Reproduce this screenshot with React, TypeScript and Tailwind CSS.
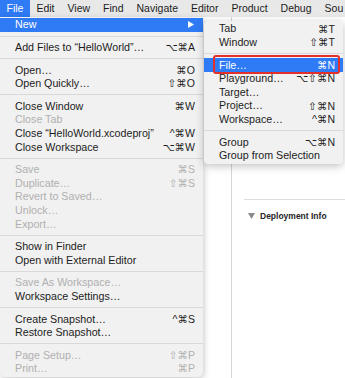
import React from "react";

type Item =
  | { sep: true }
  | { label: string; key?: string; disabled?: boolean; active?: boolean; arrow?: boolean; marked?: boolean };

const fileMenu: Item[] = [
  { label: "New", active: true, arrow: true },
  { sep: true },
  { label: "Add Files to \u201CHelloWorld\u201D\u2026", key: "\u2325\u2318A" },
  { sep: true },
  { label: "Open\u2026", key: "\u2318O" },
  { label: "Open Quickly\u2026", key: "\u21E7\u2318O" },
  { sep: true },
  { label: "Close Window", key: "\u2318W" },
  { label: "Close Tab", disabled: true },
  { label: "Close \u201CHelloWorld.xcodeproj\u201D", key: "^\u2318W" },
  { label: "Close Workspace", key: "\u2325\u2318W" },
  { sep: true },
  { label: "Save", key: "\u2318S", disabled: true },
  { label: "Duplicate\u2026", key: "\u21E7\u2318S", disabled: true },
  { label: "Revert to Saved\u2026", disabled: true },
  { label: "Unlock\u2026", disabled: true },
  { label: "Export\u2026", disabled: true },
  { sep: true },
  { label: "Show in Finder" },
  { label: "Open with External Editor" },
  { sep: true },
  { label: "Save As Workspace\u2026", disabled: true },
  { label: "Workspace Settings\u2026" },
  { sep: true },
  { label: "Create Snapshot\u2026", key: "^\u2318S" },
  { label: "Restore Snapshot\u2026" },
  { sep: true },
  { label: "Page Setup\u2026", key: "\u21E7\u2318P", disabled: true },
  { label: "Print\u2026", key: "\u2318P", disabled: true },
];

const newMenu: Item[] = [
  { label: "Tab", key: "\u2318T" },
  { label: "Window", key: "\u21E7\u2318T" },
  { sep: true },
  { label: "File\u2026", key: "\u2318N", active: true, marked: true },
  { label: "Playground\u2026", key: "\u2325\u21E7\u2318N" },
  { label: "Target\u2026" },
  { label: "Project\u2026", key: "\u21E7\u2318N" },
  { label: "Workspace\u2026", key: "^\u2318N" },
  { sep: true },
  { label: "Group", key: "\u2325\u2318N" },
  { label: "Group from Selection" },
];

const menuBar = ["File", "Edit", "View", "Find", "Navigate", "Editor", "Product", "Debug", "Sou"];

function MenuRows({ items }: { items: Item[] }) {
  return (
    <>
      {items.map((item, i) => {
        if ("sep" in item) {
          return (
            <div key={i} className="h-[9px] flex items-center">
              <div className="h-px w-full bg-[#d9d9d9]" />
            </div>
          );
        }
        const color = item.active ? "text-white" : item.disabled ? "text-[#b0b0b0]" : "text-[#1c1c1c]";
        return (
          <div
            key={i}
            className={`relative h-[13.6px] flex items-center justify-between pl-[15px] pr-[8px] ${
              item.active ? "bg-[#2f7af5]" : ""
            } ${color}`}
          >
            <span className="text-[10.7px] leading-none whitespace-nowrap">{item.label}</span>
            {item.key && (
              <span className="text-[10.5px] leading-none whitespace-nowrap font-['Liberation_Sans','DejaVu_Sans',sans-serif]">
                {item.key}
              </span>
            )}
            {item.arrow && (
              <svg width="6" height="7" viewBox="0 0 6 7" className="mr-[1px]">
                <path d="M0 0 L6 3.5 L0 7 Z" fill="#ffffff" />
              </svg>
            )}
            {item.marked && (
              <div className="absolute left-[9px] right-[3px] -top-[3px] h-[19px] rounded-[3px] border-2 border-[#e3302b]" />
            )}
          </div>
        );
      })}
    </>
  );
}

export default function App() {
  return (
    <div className="relative w-[345px] h-[378px] overflow-hidden bg-white font-['Liberation_Sans','DejaVu_Sans',sans-serif]">
      {/* menu bar */}
      <div className="flex h-[17px] bg-[#e8e8e8] text-[10.5px] text-[#1c1c1c] whitespace-nowrap">
        {menuBar.map((m, i) => (
          <div
            key={m}
            className={`flex items-center h-full px-[6.5px] ${i === 0 ? "bg-[#2f7af5] text-white" : ""}`}
          >
            {m}
          </div>
        ))}
      </div>

      {/* window behind the menus */}
      <div className="flex h-[361px]">
        <div className="w-[232px] border-r border-[#d6d6d6] bg-white" />
        <div className="flex-1 pt-[182px] pl-[12px]">
          <div className="h-px bg-[#dedede]" />
          <div className="flex items-center gap-[5px] pl-[4px] pt-[10px] text-[8.5px] font-bold text-[#262626]">
            <svg width="7" height="6" viewBox="0 0 7 6">
              <path d="M0 0 L7 0 L3.5 6 Z" fill="#8a8a8a" />
            </svg>
            <span>Deployment Info</span>
          </div>
        </div>
      </div>

      {/* File menu */}
      <div className="absolute left-0 top-[17px] w-[203px] pt-[1px] pb-[2px] bg-[#f1f1f1] rounded-b-[5px] shadow-[1px_2px_6px_rgba(0,0,0,0.22)]">
        <MenuRows items={fileMenu} />
      </div>

      {/* New submenu */}
      <div className="absolute left-[204px] top-[21px] w-[139px] pt-[1px] pb-[2px] bg-[#f1f1f1] rounded-[4px] shadow-[0_2px_8px_rgba(0,0,0,0.25)]">
        <MenuRows items={newMenu} />
      </div>
    </div>
  );
}
